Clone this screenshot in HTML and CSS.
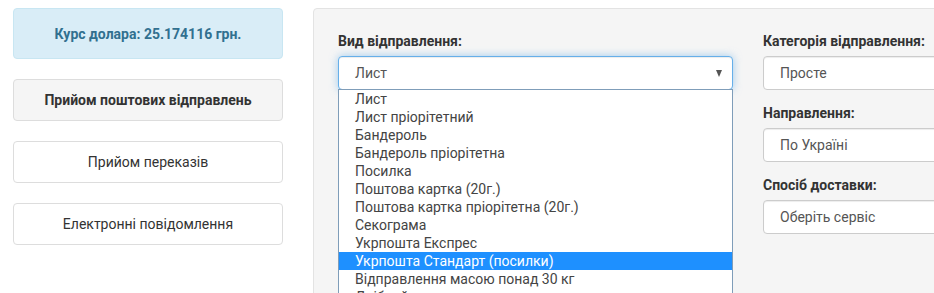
FILE: index.html
```html
<!DOCTYPE html>
<html lang="uk">
<head>
<meta charset="utf-8">
<title>Укрпошта</title>
<link rel="stylesheet" href="styles.css">
</head>
<body>
<div class="page">
  <aside class="side">
    <div class="rate">Курс долара: 25.174116 грн.</div>
    <a class="navbtn active">Прийом поштових відправлень</a>
    <a class="navbtn">Прийом переказів</a>
    <a class="navbtn">Електронні повідомлення</a>
  </aside>
  <main class="panel">
    <div class="col">
      <div class="group">
        <label class="lbl">Вид відправлення:</label>
        <div class="selwrap">
          <div class="select focus">
            <span>Лист</span>
            <span class="arrow"></span>
          </div>
          <ul class="list">
            <li>Лист</li>
            <li>Лист пріорітетний</li>
            <li>Бандероль</li>
            <li>Бандероль пріорітетна</li>
            <li>Посилка</li>
            <li>Поштова картка (20г.)</li>
            <li>Поштова картка пріорітетна (20г.)</li>
            <li>Секограма</li>
            <li>Укрпошта Експрес</li>
            <li class="hl">Укрпошта Стандарт (посилки)</li>
            <li>Відправлення масою понад 30 кг</li>
            <li>Дрібний пакет</li>
          </ul>
        </div>
      </div>
    </div>
    <div class="col">
      <div class="group">
        <label class="lbl">Категорія відправлення:</label>
        <div class="select"><span>Просте</span></div>
      </div>
      <div class="group">
        <label class="lbl">Направлення:</label>
        <div class="select"><span>По Україні</span></div>
      </div>
      <div class="group">
        <label class="lbl">Спосіб доставки:</label>
        <div class="select"><span>Оберіть сервіс</span></div>
      </div>
    </div>
  </main>
</div>
</body>
</html>
```

FILE: styles.css
```css
* { box-sizing: border-box; }
html, body { margin: 0; padding: 0; background: #fff; overflow: hidden; }
body {
  font-family: Roboto, "Liberation Sans", Arial, sans-serif;
  font-size: 14px;
  line-height: 20px;
  color: #333;
}
.page {
  display: flex;
  align-items: flex-start;
  padding: 8px 0 0 13px;
  width: 1400px;
  gap: 30px;
}
.side {
  width: 270px;
  flex: none;
  display: flex;
  flex-direction: column;
}
.rate {
  height: 51px;
  background: #d9edf7;
  border: 1px solid #c8e6f2;
  border-radius: 4px;
  color: #31708f;
  font-weight: bold;
  display: flex;
  align-items: center;
  justify-content: center;
  margin-bottom: 20px;
}
.navbtn {
  display: flex;
  align-items: center;
  justify-content: center;
  height: 42px;
  border: 1px solid #ddd;
  border-radius: 4px;
  background: #fff;
  color: #333;
  margin-bottom: 20px;
}
.navbtn.active {
  background: #f5f5f5;
  font-weight: bold;
}
.panel {
  flex: none;
  width: 900px;
  height: 400px;
  background: #f5f5f5;
  border: 1px solid #e3e3e3;
  border-radius: 4px;
  padding: 22px 24px;
  display: flex;
  gap: 30px;
}
.col { width: 395px; flex: none; }
.group { margin-bottom: 13px; }
.lbl {
  display: block;
  font-weight: bold;
  margin-bottom: 5px;
  height: 20px;
}
.select {
  position: relative;
  height: 34px;
  background: #fff;
  border: 1px solid #ccc;
  border-radius: 4px;
  box-shadow: inset 0 1px 1px rgba(0,0,0,.075);
  color: #555;
  padding: 6px 16px;
  display: flex;
  align-items: center;
  justify-content: space-between;
}
.select.focus {
  border-color: #66afe9;
  box-shadow: inset 0 1px 1px rgba(0,0,0,.075), 0 0 8px rgba(102,175,233,.6);
}
.arrow {
  width: 0;
  height: 0;
  border-left: 3.5px solid transparent;
  border-right: 3.5px solid transparent;
  border-top: 7px solid #555;
  margin-right: -6px;
}
.selwrap { position: relative; }
.list {
  position: absolute;
  left: 0;
  right: 0;
  top: 33px;
  margin: 0;
  padding: 0;
  list-style: none;
  background: #fff;
  border: 1px solid #7f9db9;
  z-index: 2;
}
.list li {
  height: 18px;
  line-height: 18px;
  padding-left: 16px;
  color: #444;
  white-space: nowrap;
}
.list li.hl {
  background: #1e90ff;
  color: #fff;
}
```
